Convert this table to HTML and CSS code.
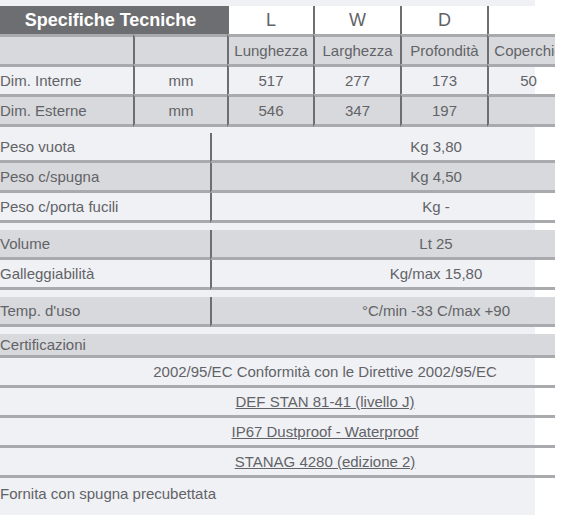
FILE: index.html
```html
<!DOCTYPE html>
<html>
<head>
  <meta charset="utf-8">
  <title>Specifiche Tecniche</title>
  <link rel="stylesheet" href="styles.css">
</head>
<body>
  <div class="sheet">
    <div class="panel">
      <table class="dims">
        <colgroup>
          <col class="c1"><col class="c2"><col class="c3"><col class="c4"><col class="c5"><col class="c6">
        </colgroup>
        <tr class="head">
          <td class="title" colspan="2">Specifiche Tecniche</td>
          <td class="axis">L</td>
          <td class="axis">W</td>
          <td class="axis">D</td>
          <td class="axis"></td>
        </tr>
        <tr class="row grey">
          <td></td><td></td><td>Lunghezza</td><td>Larghezza</td><td>Profondità</td><td>Coperchio</td>
        </tr>
        <tr class="row">
          <td class="label">Dim. Interne</td><td>mm</td><td>517</td><td>277</td><td>173</td><td>50</td>
        </tr>
        <tr class="row grey last">
          <td class="label">Dim. Esterne</td><td>mm</td><td>546</td><td>347</td><td>197</td><td></td>
        </tr>
      </table>

      <table class="specs first">
        <tr><td class="label">Peso vuota</td><td>Kg 3,80</td></tr>
        <tr class="grey"><td class="label">Peso c/spugna</td><td>Kg 4,50</td></tr>
        <tr><td class="label">Peso c/porta fucili</td><td>Kg -</td></tr>
      </table>

      <table class="specs">
        <tr class="grey"><td class="label">Volume</td><td>Lt 25</td></tr>
        <tr><td class="label">Galleggiabilità</td><td>Kg/max 15,80</td></tr>
      </table>

      <table class="specs">
        <tr class="grey"><td class="label">Temp. d'uso</td><td>°C/min -33 C/max +90</td></tr>
      </table>

      <table class="certs">
        <tr class="grey"><td class="label heading">Certificazioni</td></tr>
        <tr><td>2002/95/EC Conformità con le Direttive 2002/95/EC</td></tr>
        <tr><td><a href="#">DEF STAN 81-41 (livello J)</a></td></tr>
        <tr><td><a href="#">IP67 Dustproof - Waterproof</a></td></tr>
        <tr><td><a href="#">STANAG 4280 (edizione 2)</a></td></tr>
      </table>

      <p class="note">Fornita con spugna precubettata</p>
    </div>
  </div>
</body>
</html>
```

FILE: styles.css
```css
*{
  box-sizing: border-box;
}
body{
  margin: 0;
  background: #fff;
  font-family: "Liberation Sans", Arial, sans-serif;
  font-size: 15px;
  color: #626367;
}
.sheet{
  width: 555px;
  overflow: hidden;
}
.panel{
  width: 535px;
  background: #f0f1f5;
  padding-top: 6px;
  padding-bottom: 7px;
}

table{
  border-spacing: 0;
  table-layout: fixed;
}
td{
  padding: 0;
  vertical-align: middle;
  text-align: center;
  white-space: nowrap;
  overflow: hidden;
}
td.label{
  text-align: left;
}
.grey td{
  background: #d8d9dc;
}

/* tabella dimensioni */
.dims{
  width: 568px;
}
.c1{ width: 133px; }
.c2{ width: 94px; }
.c3{ width: 86px; }
.c4{ width: 87px; }
.c5{ width: 87px; }
.c6{ width: 81px; }
.dims td + td{
  border-left: 2px solid #6d6e71;
}
.dims .head td{
  height: 28px;
  background: #fff;
}
.dims .head .title{
  background: #6d6e71;
  color: #fff;
  font-weight: bold;
  font-size: 18px;
  padding-right: 6px;
}
.dims .head .axis{
  font-size: 18px;
}
.dims .row td{
  height: 30px;
  border-top: 3px solid #a9aaae;
}
.dims .last td{
  height: 33px;
  border-bottom: 3px solid #a9aaae;
}

/* pesi, volume, temperatura */
.specs{
  width: 660px;
  margin-top: 7px;
}
.specs.first{
  margin-top: 6px;
  margin-bottom: 1px;
}
.specs td{
  height: 30px;
  border-bottom: 3px solid #a9aaae;
}
.specs td.label{
  width: 210px;
}
.specs td + td{
  border-left: 2px solid #6d6e71;
}

/* certificazioni */
.certs{
  width: 650px;
  margin-top: 7px;
}
.certs td{
  height: 30px;
  border-bottom: 3px solid #a9aaae;
}
.certs td.heading{
  height: 24px;
}
.certs a{
  color: inherit;
  text-decoration: underline;
}

.note{
  margin: 0;
  padding-top: 7px;
  height: 30px;
  line-height: 17px;
}
```
